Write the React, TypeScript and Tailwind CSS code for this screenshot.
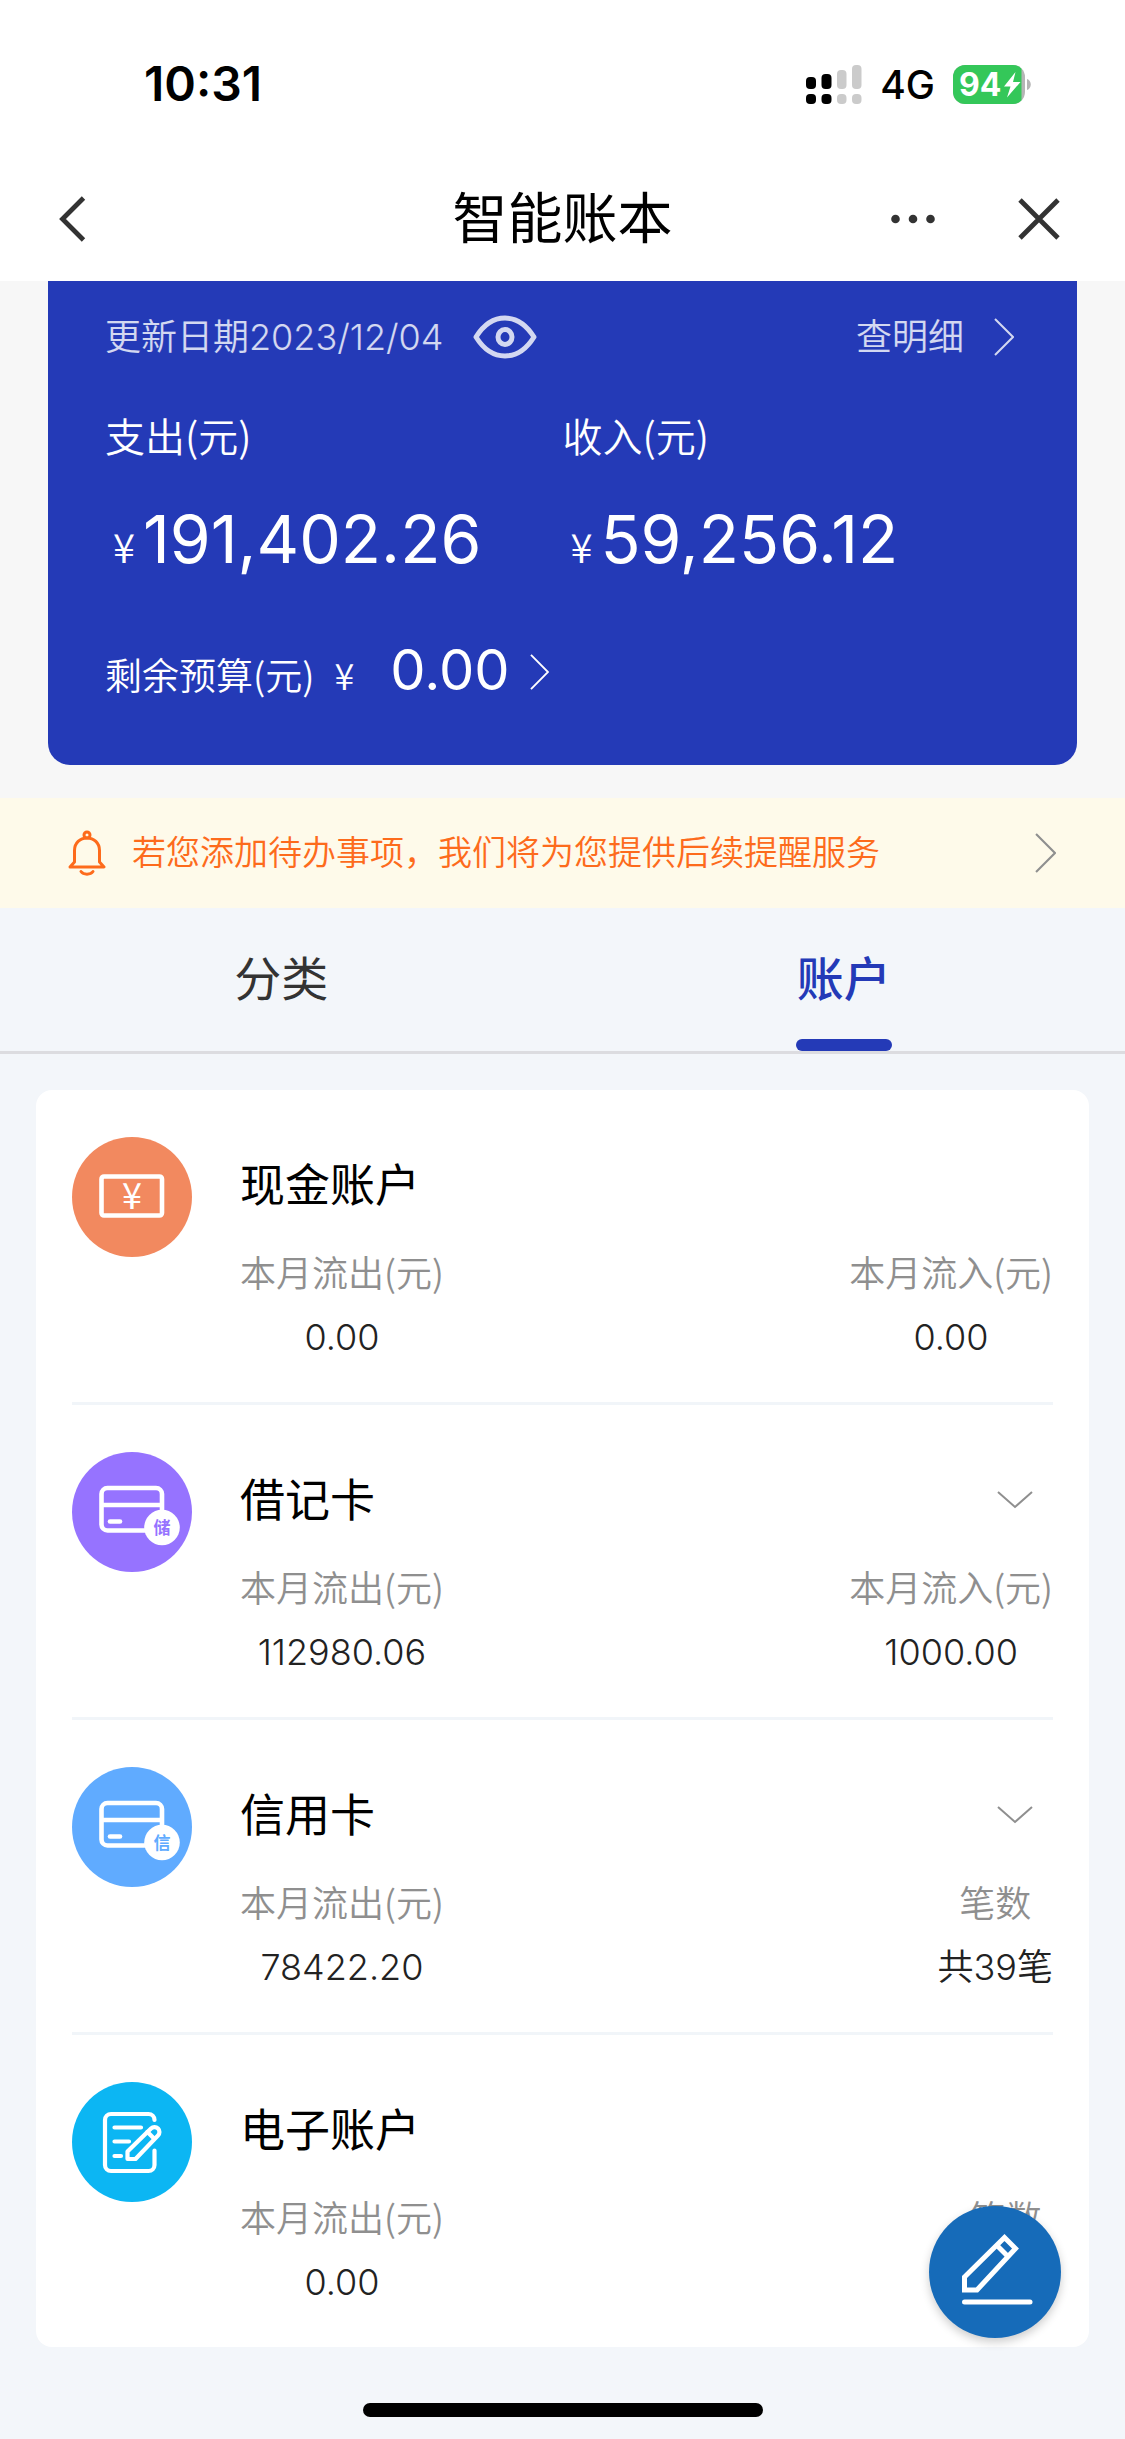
import React, { useState } from "react";

type Field = { label: string; value: string };

type Account = {
  id: string;
  name: string;
  icon: React.ReactNode;
  expandable?: boolean;
  left: Field;
  right: Field;
};

const CashIcon = () => (
  <svg viewBox="0 0 120 120" className="w-full h-full" aria-hidden="true">
    <circle cx="60" cy="60" r="60" fill="#f2895f" />
    <rect
      x="29.5"
      y="39.5"
      width="60.5"
      height="39"
      rx="2.5"
      fill="none"
      stroke="#fff"
      strokeWidth="4.6"
    />
    <text
      x="60"
      y="72"
      fill="#fff"
      fontSize="36"
      textAnchor="middle"
      fontFamily="'Noto Sans CJK SC', sans-serif"
    >
      ¥
    </text>
  </svg>
);

const BankCardIcon = ({ color, mark }: { color: string; mark: string }) => (
  <svg viewBox="0 0 120 120" className="w-full h-full" aria-hidden="true">
    <circle cx="60" cy="60" r="60" fill={color} />
    <g fill="none" stroke="#fff" strokeWidth="4.6">
      <rect x="29.5" y="36" width="60.5" height="42.5" rx="6" />
      <path d="M29.5 53H90" />
      <path d="M38 69.5H48" strokeLinecap="round" />
    </g>
    <circle cx="90" cy="75.5" r="17.8" fill="#fff" />
    <text
      x="90"
      y="82"
      fill={color}
      fontSize="17"
      fontWeight="700"
      textAnchor="middle"
      fontFamily="'Noto Sans CJK SC', sans-serif"
    >
      {mark}
    </text>
  </svg>
);

const NoteIcon = () => (
  <svg viewBox="0 0 120 120" className="w-full h-full" aria-hidden="true">
    <circle cx="60" cy="60" r="60" fill="#0cb6f3" />
    <g
      fill="none"
      stroke="#fff"
      strokeWidth="4.2"
      strokeLinecap="round"
      strokeLinejoin="round"
    >
      <path d="M82.5 38V38a6 6 0 0 0-6-6H39a6 6 0 0 0-6 6v45a6 6 0 0 0 6 6H76.5a6 6 0 0 0 6-6V68.5" />
      <path d="M42.5 45.5H69M42.5 59.5H57M42.5 74H49" />
      <path d="M55.5 77V69.5L79 46.5a4.9 4.9 0 0 1 7 7L63.5 77Z" />
      <path d="M75.5 50l6.5 6.5" />
    </g>
  </svg>
);

const ChevronRight = ({ className }: { className?: string }) => (
  <svg
    viewBox="0 0 20 38"
    className={className}
    fill="none"
    stroke="currentColor"
    strokeWidth="2"
    aria-hidden="true"
  >
    <path d="M1 1l18 18L1 37" />
  </svg>
);

const ChevronDown = () => (
  <svg
    viewBox="0 0 36 18"
    className="w-9 h-[18px]"
    fill="none"
    stroke="#8f8f8f"
    strokeWidth="2"
    aria-hidden="true"
  >
    <path d="M1 1l17 15L35 1" />
  </svg>
);

const accounts: Account[] = [
  {
    id: "cash",
    name: "现金账户",
    icon: <CashIcon />,
    left: { label: "本月流出(元)", value: "0.00" },
    right: { label: "本月流入(元)", value: "0.00" },
  },
  {
    id: "debit",
    name: "借记卡",
    icon: <BankCardIcon color="#9673ff" mark="储" />,
    expandable: true,
    left: { label: "本月流出(元)", value: "112980.06" },
    right: { label: "本月流入(元)", value: "1000.00" },
  },
  {
    id: "credit",
    name: "信用卡",
    icon: <BankCardIcon color="#60abff" mark="信" />,
    expandable: true,
    left: { label: "本月流出(元)", value: "78422.20" },
    right: { label: "笔数", value: "共39笔" },
  },
  {
    id: "electronic",
    name: "电子账户",
    icon: <NoteIcon />,
    left: { label: "本月流出(元)", value: "0.00" },
    right: { label: "笔数", value: "共0笔" },
  },
];

const tabs = [
  { id: "category", label: "分类" },
  { id: "account", label: "账户" },
];

const StatusBar = () => (
  <div className="flex h-[168px] items-center justify-between pl-[144px] pr-[94px] text-black">
    <span className="text-[48px] leading-none font-semibold">10:31</span>
    <div className="flex items-center">
      <svg viewBox="0 0 56 39" className="w-14 h-[39px]" aria-hidden="true">
        <g fill="#000">
          <rect x="0" y="12" width="10" height="12" rx="4" />
          <rect x="15.5" y="9" width="10" height="15" rx="4" />
          <rect x="0" y="29" width="10" height="10" rx="4" />
          <rect x="15.5" y="29" width="10" height="10" rx="4" />
        </g>
        <g fill="#cbcbcb">
          <rect x="31" y="5" width="9.5" height="19" rx="4" />
          <rect x="46" y="0" width="9.5" height="24" rx="4" />
          <rect x="31" y="29" width="9.5" height="10" rx="4" />
          <rect x="46" y="29" width="9.5" height="10" rx="4" />
        </g>
      </svg>
      <span className="ml-[18px] text-[39px] leading-none font-medium">4G</span>
      <svg
        viewBox="0 0 78 39"
        className="ml-[18px] w-[78px] h-[39px]"
        role="img"
        aria-label="94%"
      >
        <clipPath id="battery">
          <rect width="72" height="39" rx="12" />
        </clipPath>
        <g clipPath="url(#battery)">
          <rect width="72" height="39" fill="#b5b5b5" />
          <rect width="68.5" height="39" fill="#34c759" />
        </g>
        <path d="M74 14c5 1.5 5 9.5 0 11Z" fill="#b5b5b5" />
        <text
          x="6"
          y="31"
          fill="#fff"
          fontSize="32"
          fontWeight="700"
          fontFamily="Inter, sans-serif"
        >
          94
        </text>
        <path d="M62.5 7L51 21.5h6.5L54 32.5L67.5 17h-7.5Z" fill="#fff" />
      </svg>
    </div>
  </div>
);

const NavBar = () => (
  <div className="grid h-[113px] grid-cols-[1fr_auto_1fr] items-center px-[65px] pb-3 text-[#333]">
    <button type="button" aria-label="返回" className="-ml-1.5 justify-self-start">
      <svg
        viewBox="0 0 27 46"
        className="w-[27px] h-[46px]"
        fill="none"
        stroke="currentColor"
        strokeWidth="4.8"
      >
        <path d="M24.5 2L3.5 23l21 21" />
      </svg>
    </button>
    <h1 className="text-[55px] leading-none text-black">智能账本</h1>
    <div className="flex items-center gap-[83px] justify-self-end">
      <button type="button" aria-label="更多">
        <svg viewBox="0 0 44 10" className="w-11 h-[10px]" fill="currentColor">
          <circle cx="4.5" cy="5" r="4.3" />
          <circle cx="22" cy="5" r="4.3" />
          <circle cx="39.5" cy="5" r="4.3" />
        </svg>
      </button>
      <button type="button" aria-label="关闭">
        <svg
          viewBox="0 0 42 42"
          className="w-[42px] h-[42px]"
          fill="none"
          stroke="currentColor"
          strokeWidth="4.8"
        >
          <path d="M2 2l38 38M40 2L2 40" />
        </svg>
      </button>
    </div>
  </div>
);

const Amount = ({ label, value }: Field) => (
  <div>
    <p className="font-['Noto_Sans_CJK_SC',sans-serif] text-[40px] leading-[56px] font-[350]">
      {label}
    </p>
    <p className="mt-[38px] flex items-baseline gap-2 pl-2 text-[66px] leading-[76px]">
      <span className="font-['Noto_Sans_CJK_SC',sans-serif] text-[40px] leading-none font-[350]">
        ¥
      </span>
      {value}
    </p>
  </div>
);

const SummaryCard = () => (
  <section className="mx-12 rounded-b-[22px] bg-[#243ab7] px-[57px] pb-[63px] pt-8 text-white">
    <div className="flex items-center justify-between pr-[6px] text-[36px] leading-[48px] font-[350] text-white/80">
      <div className="flex items-center gap-[30px]">
        <span>更新日期2023/12/04</span>
        <button type="button" aria-label="隐藏金额">
          <svg
            viewBox="0 0 64 44"
            className="w-16 h-11"
            fill="none"
            stroke="currentColor"
            strokeWidth="5"
            strokeLinejoin="round"
          >
            <path d="M3 22C10.5 10 20 3 32 3s21.5 7 29 19C53.5 34 44 41 32 41S10.5 34 3 22Z" />
            <ellipse cx="32" cy="22" rx="7" ry="7.5" />
          </svg>
        </button>
      </div>
      <a href="#details" className="flex items-center gap-[30px]">
        查明细
        <ChevronRight className="w-5 h-[38px]" />
      </a>
    </div>

    <div className="mt-[46px] grid grid-cols-2">
      <Amount label="支出(元)" value="191,402.26" />
      <Amount label="收入(元)" value="59,256.12" />
    </div>

    <a href="#budget" className="mt-[61px] flex items-baseline">
      <span className="font-['Noto_Sans_CJK_SC',sans-serif] text-[37px] leading-none font-[350]">
        剩余预算(元)
      </span>
      <span className="ml-5 font-['Noto_Sans_CJK_SC',sans-serif] text-[36px] leading-none font-[350]">
        ¥
      </span>
      <span className="ml-9 text-[56px] leading-[64px]">0.00</span>
      <ChevronRight className="ml-5 w-[19px] h-9" />
    </a>
  </section>
);

const ReminderBanner = () => (
  <a
    href="#reminder"
    className="mt-[33px] flex h-[110px] items-center bg-[#fefaea] pl-[68px] pr-[69px] text-[#fd6b1c]"
  >
    <svg
      viewBox="0 0 38 46"
      className="w-[38px] h-[46px]"
      fill="none"
      stroke="currentColor"
      strokeWidth="3"
      strokeLinecap="round"
      strokeLinejoin="round"
      aria-hidden="true"
    >
      <circle cx="19" cy="5" r="3" />
      <path d="M6.5 32V20.5C6.5 13 12 8 19 8s12.5 5 12.5 12.5V32l4.5 5H2Z" />
      <path d="M13 41.5c2.5 3.5 9.5 3.5 12 0" />
    </svg>
    <span className="ml-[26px] text-[34px] leading-none font-[350]">
      若您添加待办事项，我们将为您提供后续提醒服务
    </span>
    <ChevronRight className="ml-auto w-[21px] h-10 text-[#8f8f8f]" />
  </a>
);

const AccountRow = ({ account }: { account: Account }) => (
  <li className="flex gap-12 border-b-[3px] border-[#f1f5f9] last:border-b-0">
    <div className="mt-[47px] h-[120px] w-[120px] shrink-0">{account.icon}</div>
    <div className="flex-1 pb-[43px] pt-[71px]">
      <div className="flex h-12 items-center justify-between pr-5">
        <h2 className="text-[45px] leading-none text-black">{account.name}</h2>
        {account.expandable && (
          <button type="button" aria-label={`展开${account.name}`}>
            <ChevronDown />
          </button>
        )}
      </div>
      <dl className="mt-10 flex justify-between text-center text-[36px] leading-[44px] font-[350]">
        {[account.left, account.right].map((field) => (
          <div key={field.label}>
            <dt className="font-['Noto_Sans_CJK_SC',sans-serif] text-[#8f8f8f]">
              {field.label}
            </dt>
            <dd className="mt-[22px] text-[#222]">{field.value}</dd>
          </div>
        ))}
      </dl>
    </div>
  </li>
);

const App = () => {
  const [activeTab, setActiveTab] = useState("account");

  return (
    <div className="min-h-screen bg-[#f3f6fa] font-['Inter','Noto_Sans_CJK_SC',sans-serif]">
      <header className="bg-white">
        <StatusBar />
        <NavBar />
      </header>

      <main>
        <div className="bg-[#f7f7f7]">
          <SummaryCard />
          <ReminderBanner />
        </div>

        <div role="tablist" className="flex border-b-[3px] border-[#dcdce0]">
          {tabs.map((tab) => {
            const active = tab.id === activeTab;
            return (
              <button
                key={tab.id}
                type="button"
                role="tab"
                aria-selected={active}
                onClick={() => setActiveTab(tab.id)}
                className="flex h-[143px] flex-1 flex-col items-center justify-between pt-[43px]"
              >
                <span
                  className={`text-[47px] leading-[56px] ${
                    active ? "font-medium text-[#243ab7]" : "text-[#333]"
                  }`}
                >
                  {tab.label}
                </span>
                {active && (
                  <span className="h-3 w-24 rounded-full bg-[#243ab7]" />
                )}
              </button>
            );
          })}
        </div>

        <ul className="mx-9 mt-9 rounded-2xl bg-white px-9">
          {accounts.map((account) => (
            <AccountRow key={account.id} account={account} />
          ))}
        </ul>
      </main>

      {/* Add record */}
      <button
        type="button"
        aria-label="记一笔"
        className="fixed bottom-[101px] right-16 h-[132px] w-[132px] rounded-full bg-[#166bb9] shadow-[0_4px_10px_rgba(0,0,0,0.2)]"
      >
        <svg
          viewBox="0 0 132 132"
          className="h-full w-full"
          fill="none"
          stroke="#fff"
          strokeWidth="5"
        >
          <path d="M35.5 84V71L75.5 31.5L86.5 42.5L48 84Z" />
          <path d="M67.5 39l11 11" />
          <path d="M35.5 96H101" strokeLinecap="round" />
        </svg>
      </button>

      {/* Home indicator */}
      <div className="mx-auto mt-14 h-[14px] w-[400px] rounded-full bg-black" />
    </div>
  );
};

export default App;
